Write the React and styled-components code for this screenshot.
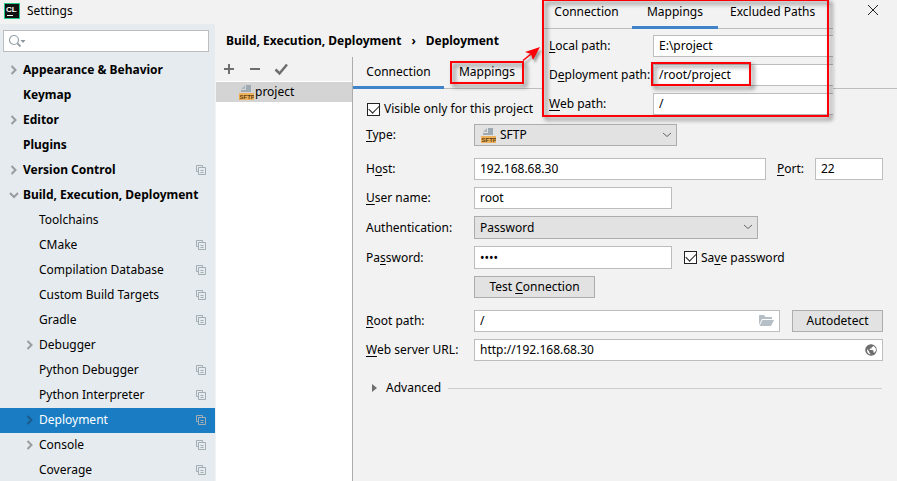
import React from "react";
import styled, { createGlobalStyle, css } from "styled-components";

const c = {
  window: "#f2f2f2",
  side: "#e6ebef",
  line: "#bdbdbd",
  button: "#e2e2e2",
  buttonLine: "#adadad",
  select: "#1a7dc4",
  tab: "#4083c9",
  mark: "#fb0007",
};

const Global = createGlobalStyle`
  * { box-sizing: border-box; }
  body { margin: 0; background: ${c.window}; overflow: hidden; }
  body, button, input, select {
    font-family: "Noto Sans", "Open Sans", sans-serif;
    font-size: 12px;
    line-height: 16px;
    color: #000;
  }
  u { text-decoration: underline; text-underline-offset: 2px; text-decoration-skip-ink: none; }
  svg { display: block; flex: none; }
`;

const Window = styled.div`
  position: relative;
  display: flex;
  flex-direction: column;
  height: 100vh;
  background: ${c.window};
`;

const TitleBar = styled.header`
  display: flex;
  align-items: center;
  gap: 7px;
  flex: none;
  height: 24px;
  padding: 0 17px 2px 4px;
`;

const WindowTitle = styled.span`
  flex: 1;
`;

const IconButton = styled.button`
  display: grid;
  place-items: center;
  padding: 0;
  border: 0;
  background: none;
`;

const Columns = styled.div`
  display: flex;
  flex: 1;
  min-height: 0;
`;

const Sidebar = styled.aside`
  flex: none;
  width: 215px;
  padding-top: 6px;
  overflow: hidden;
  background: ${c.side};
`;

const SearchBox = styled.label`
  display: flex;
  align-items: center;
  height: 22px;
  margin: 0 6px 6px 3px;
  padding: 0 4px;
  border: 1px solid ${c.line};
  background: #fff;
`;

const BareInput = styled.input`
  flex: 1;
  min-width: 0;
  padding: 0;
  border: 0;
  outline: 0;
  background: none;
`;

const Tree = styled.ul`
  margin: 0;
  padding: 0;
  list-style: none;
`;

const TreeItem = styled.li`
  display: flex;
  align-items: center;
  height: 25px;
  padding: 0 9px 2px ${(p) => (p.$child ? 25 : 9)}px;
  font-weight: ${(p) => (p.$child ? 400 : 700)};
  white-space: nowrap;
  color: ${(p) => (p.$selected ? "#fff" : "#000")};
  background: ${(p) => (p.$selected ? c.select : "none")};
`;

const TreeArrow = styled.span`
  flex: none;
  width: 14px;
  color: ${(p) => (p.$selected ? "#1c5a8c" : "#999c9e")};
`;

const TreeLabel = styled.span`
  flex: 1;
`;

const Main = styled.main`
  display: flex;
  flex-direction: column;
  flex: 1;
  min-width: 0;
  margin-left: 1px;
`;

const Breadcrumb = styled.h1`
  display: flex;
  gap: 10px;
  flex: none;
  height: 33px;
  margin: 0;
  padding: 9px 10px 0;
  font-size: 12px;
  line-height: 16px;
`;

const Servers = styled.section`
  display: flex;
  flex-direction: column;
  flex: none;
  width: 136px;
`;

const Toolbar = styled.div`
  display: flex;
  align-items: center;
  gap: 12px;
  height: 24px;
  padding-left: 6px;
`;

const ServerList = styled.ul`
  flex: 1;
  margin: 0;
  padding: 1px 0 0;
  list-style: none;
  background: #fff;
`;

const Server = styled.li`
  display: flex;
  align-items: center;
  gap: 1px;
  height: 20px;
  padding-left: 23px;
  background: #d4d4d4;
`;

const Detail = styled.section`
  flex: 1;
  min-width: 0;
  border-left: 1px solid ${c.buttonLine};
`;

const Tabs = styled.div`
  display: flex;
  height: ${(p) => (p.$inset ? 29 : 32)}px;
  box-shadow: inset 0 -1px ${c.line};
`;

const Tab = styled.button`
  position: relative;
  min-width: ${(p) => p.$min || 0}px;
  padding: 0 12px ${(p) => (p.$inset ? 5 : 2)}px;
  border: 0;
  white-space: nowrap;
  background: none;
  box-shadow: ${(p) => (p.$active ? `inset 0 -3px ${c.tab}` : "none")};
`;

const markStyle = css`
  position: absolute;
  border: 2px solid ${c.mark};
  filter: drop-shadow(3px 3px 2px rgba(0, 0, 0, 0.55));
  pointer-events: none;
`;

const TabMark = styled.span`
  ${markStyle}
  inset: 4px 6px 5px;
`;

const Form = styled.form`
  display: flex;
  flex-direction: column;
  gap: 7px;
  padding: 12px 14px 0 13px;
`;

const Row = styled.div`
  display: flex;
  align-items: center;
  min-height: ${(p) => (p.$tall ? 23 : 22)}px;
  margin-top: ${(p) => (p.$apart ? 5 : 0)}px;
`;

const Label = styled.label`
  flex: none;
  width: ${(p) => p.$width || 108}px;
  white-space: nowrap;
`;

const Field = styled.span`
  display: flex;
  align-items: center;
  align-self: stretch;
  flex: ${(p) => (p.$width ? "none" : 1)};
  width: ${(p) => (p.$width ? p.$width + "px" : "auto")};
  min-width: 0;
  padding: 0 5px;
  border: 1px solid ${c.line};
  background: #fff;
`;

const SelectBox = styled.span`
  position: relative;
  display: flex;
  align-self: stretch;
  width: ${(p) => p.$width}px;
`;

const Select = styled.select`
  flex: 1;
  appearance: none;
  padding: 0 20px 0 ${(p) => (p.$icon ? 25 : 5)}px;
  border: 1px solid ${c.buttonLine};
  border-radius: 0;
  background: ${c.button};
`;

const SelectIcon = styled.span`
  position: absolute;
  top: 3px;
  left: 7px;
  pointer-events: none;
`;

const SelectArrow = styled.span`
  position: absolute;
  top: 8px;
  right: 5px;
  pointer-events: none;
`;

const Button = styled.button`
  align-self: stretch;
  width: ${(p) => p.$width}px;
  padding: 0;
  border: 1px solid ${c.buttonLine};
  background: ${c.button};
`;

const CheckLabel = styled.label`
  display: flex;
  align-items: center;
  gap: 4px;
  white-space: nowrap;
`;

const Checkbox = styled.input`
  appearance: none;
  display: grid;
  place-items: center;
  width: 13px;
  height: 13px;
  margin: 0 0 0 1px;
  border: 1px solid #222;
  background: #fff;
  &:checked::before {
    content: "";
    width: 9px;
    height: 5px;
    margin-top: -3px;
    border: solid #222;
    border-width: 0 0 1px 1px;
    transform: rotate(-45deg);
  }
`;

const Spacer = styled.span`
  flex: none;
  width: ${(p) => p.$width}px;
`;

const IndentedRow = styled(Row)`
  padding-left: 108px;
`;

const Advanced = styled.div`
  display: flex;
  align-items: center;
  gap: 7px;
  margin: 12px 1px 0 6px;
`;

const AdvancedToggle = styled.button`
  display: flex;
  align-items: center;
  gap: 9px;
  padding: 0;
  border: 0;
  background: none;
`;

const Rule = styled.hr`
  flex: 1;
  margin: 0;
  border: 0;
  border-top: 1px solid #cdcdcd;
`;

const Callout = styled.section`
  position: absolute;
  top: 0;
  right: 64px;
  width: 290px;
  background: ${c.window};
`;

const CalloutClip = styled.div`
  overflow: hidden;
`;

const CalloutTabs = styled(Tabs)`
  margin-left: -2px;
`;

const CalloutFields = styled.div`
  display: flex;
  flex-direction: column;
  gap: 7px;
  padding: 6px 0 0 6px;
`;

const OpenField = styled(Field)`
  border-right: 0;
`;

const CalloutFrame = styled.span`
  ${markStyle}
  border-width: 2px;
  inset: -1px 4px -2px -1px;
`;

const PathMark = styled.span`
  ${markStyle}
  top: 62px;
  left: 108px;
  width: 100px;
  height: 24px;
`;

const CalloutArrow = styled.svg`
  position: absolute;
  top: 45px;
  left: -22px;
  filter: drop-shadow(2px 3px 1px rgba(0, 0, 0, 0.35));
`;

const AppIcon = () => (
  <svg width="16" height="16" viewBox="0 0 16 16">
    <rect width="16" height="16" fill="#21c98a" />
    <rect x="1" y="1" width="14" height="14" fill="#111" />
    <text x="2" y="9" fontFamily="Liberation Sans" fontSize="8" fontWeight="700" fill="#fff">CL</text>
    <rect x="3" y="12" width="6" height="1" fill="#fff" />
  </svg>
);

const CloseIcon = () => (
  <svg width="14" height="14" viewBox="0 0 14 14" stroke="#222" fill="none">
    <path d="M2 1l10 10M12 1L2 11" />
  </svg>
);

const SearchIcon = () => (
  <svg width="18" height="14" viewBox="0 0 18 14" fill="none" stroke="#95a0a8">
    <circle cx="6" cy="6" r="4.5" strokeWidth="1.2" />
    <path d="M9.2 9.2L12.5 12.5" strokeWidth="1.8" />
    <path d="M12.500 6h5L15 9z" fill="#8c969c" stroke="none" />
  </svg>
);

const Chevron = ({ open }) => (
  <svg width="10" height="10" viewBox="0 0 10 10" fill="none" stroke="currentColor" strokeWidth="2">
    <path d={open ? "M1 3l4 4 4-4" : "M2.5 1l4 4-4 4"} />
  </svg>
);

const CopyIcon = () => (
  <svg width="10" height="10" viewBox="0 0 10 10" fill="none" stroke="#a2adb4">
    <path d="M2.500 6.500h-2v-6h6v2" />
    <path d="M2.500 2.500h7v7h-7zM4.500 5.500h3M4.500 7.500h3" />
  </svg>
);

const SftpIcon = () => (
  <svg width="15" height="16" viewBox="0 0 15 16">
    <path d="M7 1h5v7H2V6h5z" fill="#9fabb4" />
    <path d="M6 1v4H2z" fill="#aeb8bf" />
    <rect y="9" width="15" height="7" fill="#eeb25c" />
    <text x="0.5" y="15" fontFamily="Liberation Sans" fontSize="6" fontWeight="700" fill="#5c3d10">SFTP</text>
  </svg>
);

const PlusIcon = () => (
  <svg width="14" height="14" viewBox="0 0 14 14" stroke="#6e6e6e" strokeWidth="2">
    <path d="M2 7h10M7 2v10" />
  </svg>
);

const MinusIcon = () => (
  <svg width="14" height="14" viewBox="0 0 14 14" stroke="#6e6e6e" strokeWidth="2">
    <path d="M2 7h10" />
  </svg>
);

const CheckIcon = () => (
  <svg width="14" height="14" viewBox="0 0 14 14" fill="none" stroke="#6e6e6e" strokeWidth="2.5">
    <path d="M1.5 7.500l4 4L13 2.500" />
  </svg>
);

const DropIcon = () => (
  <svg width="10" height="6" viewBox="0 0 10 6" fill="none" stroke="#666">
    <path d="M1 1l4 3.500L9 1" />
  </svg>
);

const FolderIcon = () => (
  <svg width="16" height="12" viewBox="0 0 16 12" fill="#b6bfc5">
    <path d="M1 10V0h5l1.500 2H14v2H4z" />
    <path d="M4.500 5H16l-3 6H1.500z" />
  </svg>
);

const GlobeIcon = () => (
  <svg width="12" height="12" viewBox="0 0 12 12">
    <circle cx="6" cy="6" r="5.200" fill="#fff" stroke="#6e6e6e" strokeWidth="1.200" />
    <path d="M1 4l3.500 3.500v1L6 9.500V11C3 11 0 8.500 1 4zM3 1.500L6 .8 8 1v1.500L6.500 3.500V4.500H5L4.500 6H7.500L8.500 7v1.500h1L10.500 10 8 11 6 11.200C3 11 1 9 .8 6L1.500 3.500z" fill="#6e6e6e" />
    <path d="M7.500 3.500L9 2.500l1.700 2L10.800 7 9.500 7.500 8.500 5.500 6.500 5zM2 5l2 2.200v1l1.200 1v1.200C3 10 1.800 8 2 5z" fill="#fff" />
  </svg>
);

const TriangleIcon = () => (
  <svg width="5" height="8" viewBox="0 0 5 8">
    <path d="M0 0l5 4-5 4z" fill="#6e6e6e" />
  </svg>
);

const items = [
  { name: "Appearance & Behavior", arrow: true },
  { name: "Keymap" },
  { name: "Editor", arrow: true },
  { name: "Plugins" },
  { name: "Version Control", arrow: true, copy: true },
  { name: "Build, Execution, Deployment", arrow: true, open: true },
  { name: "Toolchains", child: true },
  { name: "CMake", child: true, copy: true },
  { name: "Compilation Database", child: true, copy: true },
  { name: "Custom Build Targets", child: true, copy: true },
  { name: "Gradle", child: true, copy: true },
  { name: "Debugger", child: true, arrow: true },
  { name: "Python Debugger", child: true, copy: true },
  { name: "Python Interpreter", child: true, copy: true },
  { name: "Deployment", child: true, arrow: true, copy: true, selected: true },
  { name: "Console", child: true, arrow: true, copy: true },
  { name: "Coverage", child: true, copy: true },
];

export default function App() {
  return (
    <>
      <Global />
      <Window>
        <TitleBar>
          <AppIcon />
          <WindowTitle>Settings</WindowTitle>
          <IconButton aria-label="Close"><CloseIcon /></IconButton>
        </TitleBar>
        <Columns>
          <Sidebar>
            <SearchBox>
              <SearchIcon />
              <BareInput type="search" aria-label="Search settings" />
            </SearchBox>
            <Tree>
              {items.map((item) => (
                <TreeItem key={item.name} $child={item.child} $selected={item.selected}>
                  <TreeArrow $selected={item.selected}>{item.arrow && <Chevron open={item.open} />}</TreeArrow>
                  <TreeLabel>{item.name}</TreeLabel>
                  {item.copy && <CopyIcon />}
                </TreeItem>
              ))}
            </Tree>
          </Sidebar>
          <Main>
            <Breadcrumb>
              <span>Build, Execution, Deployment</span>
              <span>›</span>
              <span>Deployment</span>
            </Breadcrumb>
            <Columns>
              <Servers>
                <Toolbar>
                  <IconButton aria-label="Add"><PlusIcon /></IconButton>
                  <IconButton aria-label="Remove"><MinusIcon /></IconButton>
                  <IconButton aria-label="Use as default"><CheckIcon /></IconButton>
                </Toolbar>
                <ServerList>
                  <Server><SftpIcon />project</Server>
                </ServerList>
              </Servers>
              <Detail>
                <Tabs role="tablist">
                  <Tab role="tab" aria-selected="true" $active $min={91}>Connection</Tab>
                  <Tab role="tab" aria-selected="false" $min={86}>Mappings<TabMark /></Tab>
                </Tabs>
                <Form onSubmit={(e) => e.preventDefault()}>
                  <CheckLabel>
                    <Checkbox type="checkbox" defaultChecked />
                    <span>Visible only for this project</span>
                  </CheckLabel>
                  <Row>
                    <Label htmlFor="type"><u>T</u>ype:</Label>
                    <SelectBox $width={203}>
                      <Select id="type" $icon><option>SFTP</option></Select>
                      <SelectIcon><SftpIcon /></SelectIcon>
                      <SelectArrow><DropIcon /></SelectArrow>
                    </SelectBox>
                  </Row>
                  <Row $apart>
                    <Label htmlFor="host">H<u>o</u>st:</Label>
                    <Field><BareInput id="host" defaultValue="192.168.68.30" /></Field>
                    <Spacer $width={11} />
                    <Label htmlFor="port" $width={38}><u>P</u>ort:</Label>
                    <Field $width={68}><BareInput id="port" defaultValue="22" /></Field>
                  </Row>
                  <Row>
                    <Label htmlFor="user"><u>U</u>ser name:</Label>
                    <Field $width={198}><BareInput id="user" defaultValue="root" /></Field>
                  </Row>
                  <Row $tall>
                    <Label htmlFor="auth">Authentication:</Label>
                    <SelectBox $width={284}>
                      <Select id="auth"><option>Password</option></Select>
                      <SelectArrow><DropIcon /></SelectArrow>
                    </SelectBox>
                  </Row>
                  <Row $tall>
                    <Label htmlFor="password">Pa<u>s</u>sword:</Label>
                    <Field $width={198}><BareInput id="password" type="password" defaultValue="root" /></Field>
                    <Spacer $width={11} />
                    <CheckLabel>
                      <Checkbox type="checkbox" defaultChecked />
                      <span>Sa<u>v</u>e password</span>
                    </CheckLabel>
                  </Row>
                  <IndentedRow>
                    <Button type="button" $width={121}>Test <u>C</u>onnection</Button>
                  </IndentedRow>
                  <Row $apart>
                    <Label htmlFor="root-path"><u>R</u>oot path:</Label>
                    <Field>
                      <BareInput id="root-path" defaultValue="/" />
                      <FolderIcon />
                    </Field>
                    <Spacer $width={12} />
                    <Button type="button" $width={91}>Autodetect</Button>
                  </Row>
                  <Row>
                    <Label htmlFor="url"><u>W</u>eb server URL:</Label>
                    <Field>
                      <BareInput id="url" defaultValue="http://192.168.68.30" />
                      <GlobeIcon />
                    </Field>
                  </Row>
                  <Advanced>
                    <AdvancedToggle type="button"><TriangleIcon />Advanced</AdvancedToggle>
                    <Rule />
                  </Advanced>
                </Form>
              </Detail>
            </Columns>
          </Main>
        </Columns>
        <Callout>
          <CalloutClip>
            <CalloutTabs role="tablist" $inset>
              <Tab role="tab" aria-selected="false" $inset $min={91}>Connection</Tab>
              <Tab role="tab" aria-selected="true" $inset $active $min={86}>Mappings</Tab>
              <Tab role="tab" aria-selected="false" $inset>Excluded Paths</Tab>
            </CalloutTabs>
            <CalloutFields>
              <Row>
                <Label htmlFor="local" $width={104}><u>L</u>ocal path:</Label>
                <OpenField><BareInput id="local" defaultValue="E:\project" /></OpenField>
              </Row>
              <Row>
                <Label htmlFor="deploy" $width={104}>D<u>e</u>ployment path:</Label>
                <OpenField><BareInput id="deploy" defaultValue="/root/project" /></OpenField>
              </Row>
              <Row>
                <Label htmlFor="web" $width={104}><u>W</u>eb path:</Label>
                <OpenField><BareInput id="web" defaultValue="/" /></OpenField>
              </Row>
            </CalloutFields>
          </CalloutClip>
          <PathMark />
          <CalloutFrame />
          <CalloutArrow width="22" height="18" viewBox="0 0 22 18" fill={c.mark}>
            <path d="M2 15.500L10 9" stroke={c.mark} strokeWidth="1.500" />
            <path d="M19 2L4 7l6 2 2 6z" />
          </CalloutArrow>
        </Callout>
      </Window>
    </>
  );
}
